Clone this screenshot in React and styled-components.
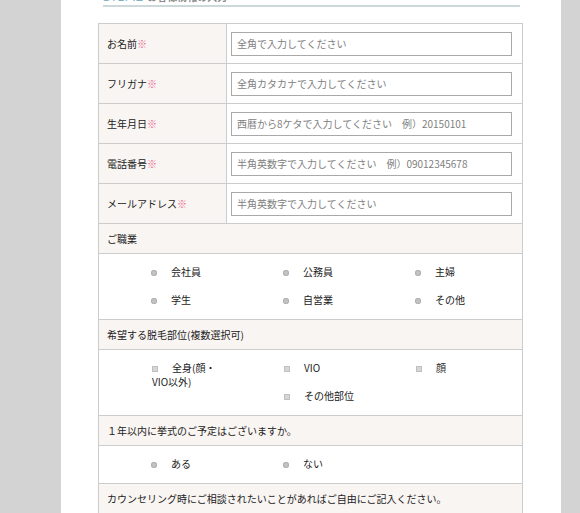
import React from "react"
import styled, { createGlobalStyle } from "styled-components"

const GlobalStyle = createGlobalStyle`
  html, body {
    margin: 0;
    padding: 0;
    background: #d3d3d3;
    overflow: hidden;
  }
  body {
    font-family: "Noto Sans CJK JP", "Noto Sans", sans-serif;
    font-size: 10px;
    color: #333;
  }
`

const profileRows = [
  { label: "お名前", placeholder: "全角で入力してください" },
  { label: "フリガナ", placeholder: "全角カタカナで入力してください" },
  { label: "生年月日", placeholder: "西暦から8ケタで入力してください　例）20150101" },
  { label: "電話番号", placeholder: "半角英数字で入力してください　例）09012345678" },
  { label: "メールアドレス", placeholder: "半角英数字で入力してください" },
]

const jobs = ["会社員", "公務員", "主婦", "学生", "自営業", "その他"]

const App = () => {
  return (
    <>
      <GlobalStyle />
      <Panel>
        <StepTitle>
          <StepNo>STEP.2</StepNo>
          <StepName>お客様情報の入力</StepName>
        </StepTitle>
        <FormTable>
          {profileRows.map(row => (
            <FieldRow key={row.label}>
              <Label>
                {row.label}
                <Required>※</Required>
              </Label>
              <InputCell>
                <TextInput placeholder={row.placeholder} />
              </InputCell>
            </FieldRow>
          ))}

          <SectionHead>ご職業</SectionHead>
          <Options>
            {jobs.map(job => (
              <Option key={job}>
                <Radio />
                {job}
              </Option>
            ))}
          </Options>

          <SectionHead>希望する脱毛部位(複数選択可)</SectionHead>
          <Options>
            <Option $rowSpan={2}>
              <Check />
              全身(顔・
              <br />
              VIO以外)
            </Option>
            <Option>
              <Check />
              VIO
            </Option>
            <Option>
              <Check />
              顔
            </Option>
            <Option $col={2}>
              <Check />
              その他部位
            </Option>
          </Options>

          <SectionHead>１年以内に挙式のご予定はございますか。</SectionHead>
          <Options>
            <Option>
              <Radio />
              ある
            </Option>
            <Option>
              <Radio />
              ない
            </Option>
          </Options>

          <SectionHead>カウンセリング時にご相談されたいことがあればご自由にご記入ください。</SectionHead>
        </FormTable>
      </Panel>
    </>
  )
}

const Panel = styled.div`
  margin-left: 61px;
  width: 500px;
  height: 513px;
  background: #fff;
  padding: 0 38px 0 37px;
  box-sizing: border-box;
  overflow: hidden;
`

const StepTitle = styled.h2`
  margin: -11px 3px 0 5px;
  padding-bottom: 1px;
  line-height: 14px;
  border-bottom: 2px solid #cdd8db;
  font-weight: normal;
  display: flex;
  align-items: baseline;
  gap: 4px;
`

const StepNo = styled.span`
  font-family: "Open Sans", sans-serif;
  font-size: 13px;
  color: #7fb0c4;
`

const StepName = styled.span`
  font-size: 10px;
  font-weight: bold;
  color: #8a8a8a;
`

const FormTable = styled.div`
  margin-top: 16px;
  border: 1px solid #ccc;
  border-bottom: none;
`

const FieldRow = styled.div`
  display: grid;
  grid-template-columns: 128px 1fr;
  height: 40px;
  border-bottom: 1px solid #ccc;
  box-sizing: border-box;
`

const Label = styled.div`
  display: flex;
  align-items: center;
  padding-left: 8px;
  background: #f9f5f2;
  border-right: 1px solid #ccc;
  color: #222;
`

const Required = styled.span`
  color: #ec5f8a;
`

const InputCell = styled.div`
  display: flex;
  align-items: center;
  padding-left: 4px;
`

const TextInput = styled.input`
  box-sizing: border-box;
  width: 281px;
  height: 24px;
  margin: 0;
  padding: 0 5px;
  border: 1px solid #a9a9a9;
  border-radius: 0;
  font-family: inherit;
  font-size: 10px;
  color: #333;
  outline: none;
  &::placeholder {
    color: #808080;
  }
`

const SectionHead = styled.div`
  height: 30px;
  box-sizing: border-box;
  display: flex;
  align-items: center;
  padding-left: 8px;
  background: #f9f5f2;
  border-bottom: 1px solid #ccc;
  color: #222;
`

const Options = styled.ul`
  list-style: none;
  margin: 0;
  padding: 4px 0 5px 51px;
  display: grid;
  grid-template-columns: repeat(3, 132px);
  grid-auto-rows: 28px;
  border-bottom: 1px solid #ccc;
`

const Option = styled.li`
  padding: 7px 0 0 2px;
  line-height: 14px;
  color: #1a1a1a;
  grid-row: ${p => (p.$rowSpan ? `span ${p.$rowSpan}` : "auto")};
  grid-column: ${p => (p.$col ? p.$col : "auto")};
`

const Radio = styled.span`
  display: inline-block;
  width: 6px;
  height: 6px;
  margin: 0 14px 1px -1px;
  border-radius: 50%;
  background: #c4c4c4;
  box-shadow: inset 0 0 0 1px #b0b0b0;
  vertical-align: middle;
`

const Check = styled.span`
  display: inline-block;
  width: 6px;
  height: 6px;
  margin: 0 14px 1px 0;
  background: #d6d6d6;
  box-shadow: inset 0 0 0 1px #c0c0c0;
  vertical-align: middle;
`

export default App
